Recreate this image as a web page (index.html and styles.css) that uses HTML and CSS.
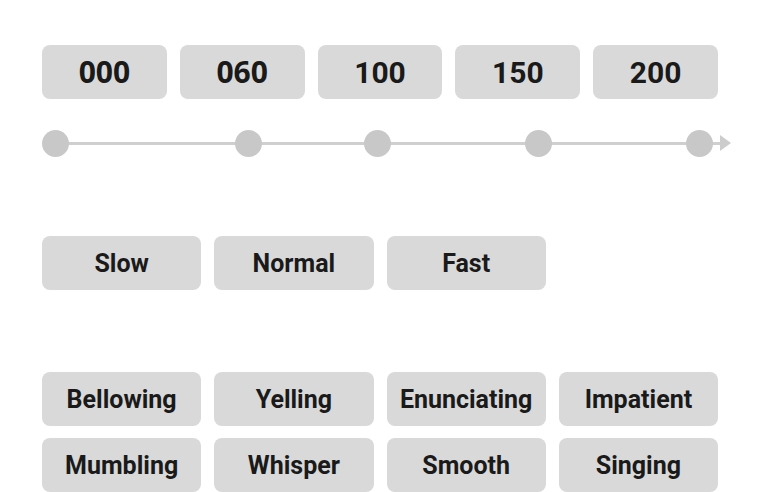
FILE: index.html
```html
<!DOCTYPE html>
<html lang="en">
<head>
    <meta charset="UTF-8">
    <meta name="viewport" content="width=device-width, initial-scale=1.0">
    <title>Voice Speed</title>
    <link rel="stylesheet" href="styles.css">
</head>

<body>
    <div class="panel">
        <!-- Speed values -->
        <div class="values">
            <button class="chip chip-num alt">000</button>
            <button class="chip chip-num alt">060</button>
            <button class="chip chip-num">100</button>
            <button class="chip chip-num">150</button>
            <button class="chip chip-num">200</button>
        </div>

        <!-- Timeline -->
        <div class="timeline">
            <div class="track"></div>
            <div class="arrow"></div>
            <span class="dot" style="left: calc(0 / 200 * 643.5px)"></span>
            <span class="dot" style="left: calc(60 / 200 * 643.5px)"></span>
            <span class="dot" style="left: calc(100 / 200 * 643.5px)"></span>
            <span class="dot" style="left: calc(150 / 200 * 643.5px)"></span>
            <span class="dot" style="left: calc(200 / 200 * 643.5px)"></span>
        </div>

        <!-- Speed presets -->
        <div class="grid speeds">
            <button class="chip">Slow</button>
            <button class="chip">Normal</button>
            <button class="chip">Fast</button>
        </div>

        <!-- Voice styles -->
        <div class="grid styles">
            <button class="chip">Bellowing</button>
            <button class="chip">Yelling</button>
            <button class="chip">Enunciating</button>
            <button class="chip">Impatient</button>
            <button class="chip">Mumbling</button>
            <button class="chip">Whisper</button>
            <button class="chip">Smooth</button>
            <button class="chip">Singing</button>
        </div>
    </div>
</body>
</html>
```

FILE: styles.css
```css
body {
    font-family: Roboto, "Liberation Sans", sans-serif;
    margin: 0;
    padding: 0;
    background: #ffffff;
    overflow: hidden;
}

.panel {
    width: 676px;
    padding: 45px 0 0 42px;
}

.chip {
    height: 54px;
    border: none;
    border-radius: 8px;
    background: #d9d9d9;
    color: #1a1a1a;
    font-family: Roboto, "Liberation Sans", sans-serif;
    font-weight: bold;
    font-size: 25px;
    padding: 0;
    cursor: pointer;
}

.values {
    display: grid;
    grid-template-columns: repeat(5, 1fr);
    column-gap: 13px;
}

.chip-num {
    font-size: 30px;
}

/* first two values render in a rounder face */
.chip-num.alt {
    font-family: "Open Sans", sans-serif;
    padding-bottom: 2px;
}

/* Timeline with value markers */
.timeline {
    position: relative;
    height: 27px;
    margin-top: 31px;
}

.track {
    position: absolute;
    left: 13px;
    right: -2px;
    top: 12px;
    height: 3px;
    background: #cfcfcf;
}

.arrow {
    position: absolute;
    left: 678px;
    top: 5px;
    width: 0;
    height: 0;
    border-top: 8px solid transparent;
    border-bottom: 8px solid transparent;
    border-left: 11px solid #cccccc;
}

.dot {
    position: absolute;
    top: 0;
    width: 27px;
    height: 27px;
    border-radius: 50%;
    background: #c8c8c8;
}

.grid {
    display: grid;
    grid-template-columns: repeat(4, 1fr);
    gap: 12px 13px;
}

.speeds {
    margin-top: 79px;
}

.styles {
    margin-top: 82px;
}
```
